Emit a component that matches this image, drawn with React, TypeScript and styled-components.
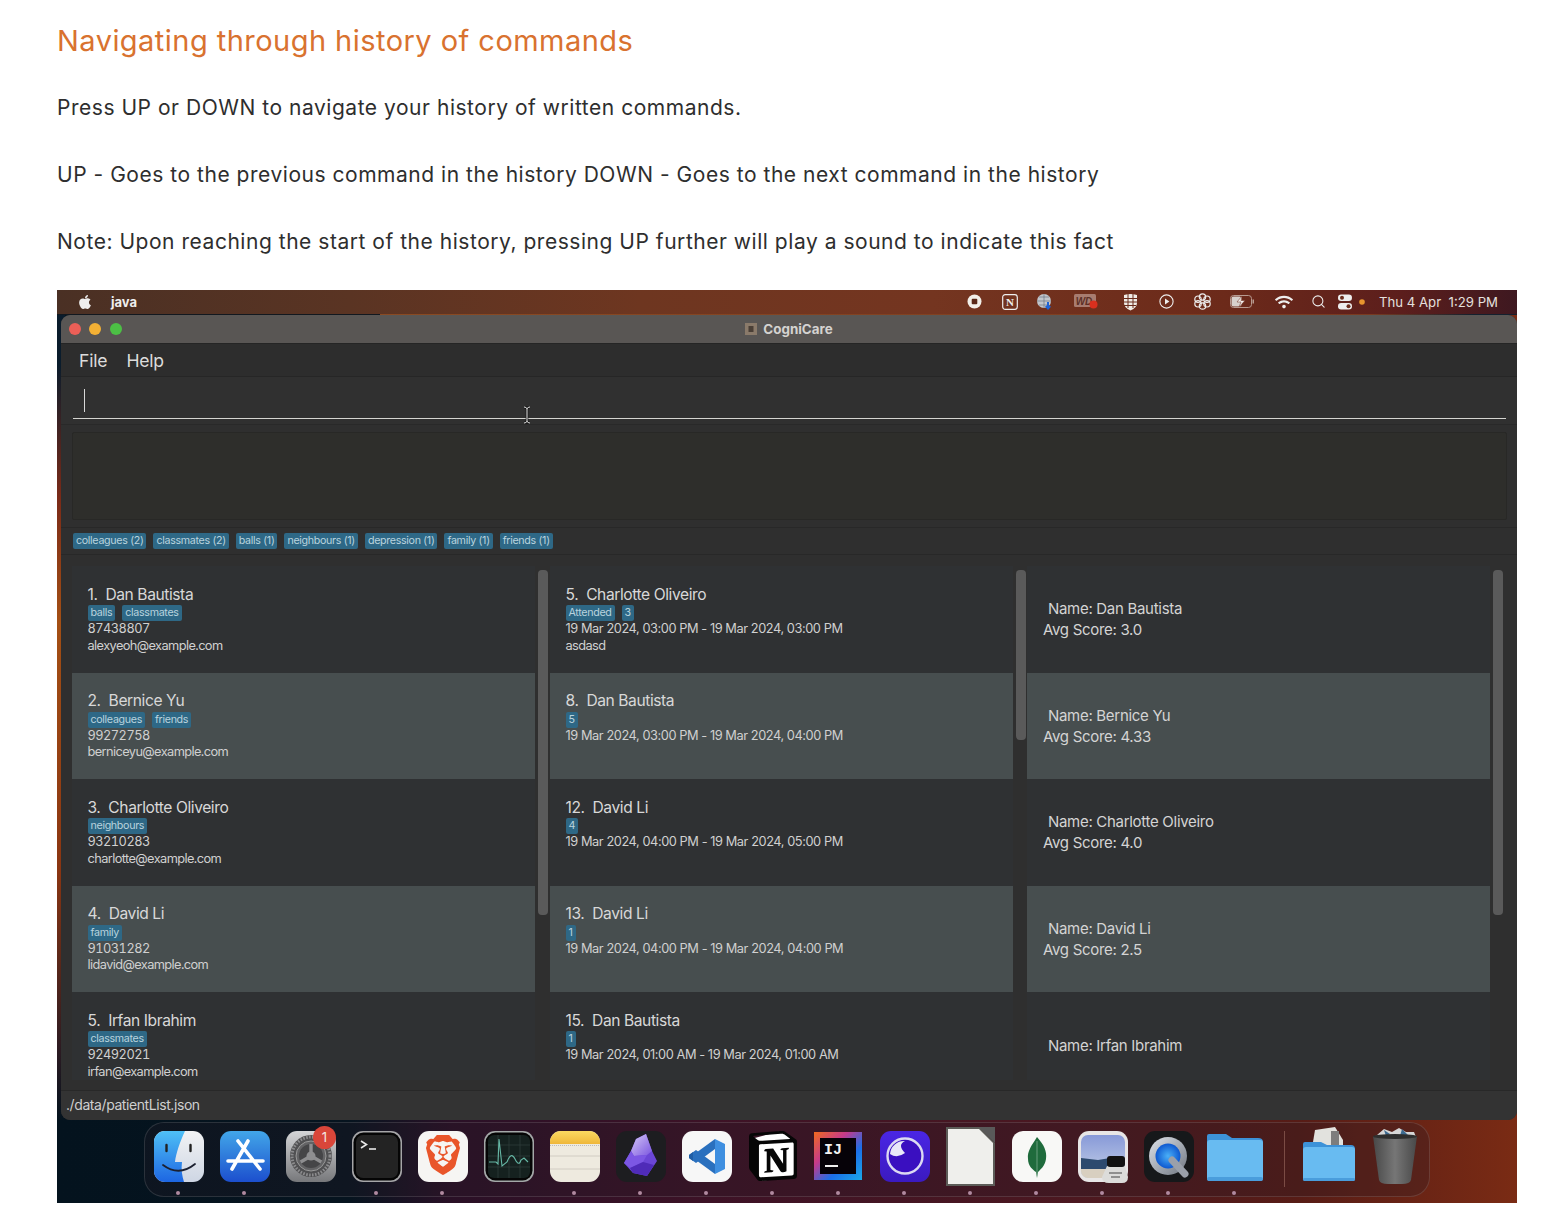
import React from "react";
import styled, { createGlobalStyle } from "styled-components";
import { FaApple, FaWifi } from "react-icons/fa";
import { Search } from "lucide-react";
import { SiBrave, SiNotion } from "react-icons/si";

const Global = createGlobalStyle`
  html, body { margin: 0; padding: 0; background: #fff; }
  body { font-family: "Inter", "Liberation Sans", sans-serif; }
`;

const Page = styled.div`
  width: 1564px; height: 1224px; box-sizing: border-box; padding: 0 47px 21px 57px; overflow: hidden; background: #fff;
`;
const Heading = styled.h1`
  margin: 0; padding-top: 22px; height: 36px; font-size: 29px; line-height: 38px; font-weight: 400; color: #d9722f; letter-spacing: 0.46px;
`;
const Para = styled.p`
  margin: 0; padding-top: 33px; font-size: 21px; height: 34px; line-height: 34px; color: #2e2e2e; letter-spacing: 0.53px; white-space: nowrap;
`;
const Intro = styled.div` height: 290px; `;

const Desktop = styled.div`
  position: relative; width: 1460px; height: 913px; overflow: hidden;
  background:
    linear-gradient(90deg, #04131e 0%, #06141f 20%, #2a1026 27%, #3d1226 45%, #4c1820 70%, #571c16 85%, #7a2b14 100%);
`;
const LeftGlow = styled.div`
  position: absolute; left: 0; top: 0; width: 8px; height: 830px;
  background: linear-gradient(180deg, #0a1c2c 0%, #0a1c2c 9%, #7a2a18 25%, #a44f14 40%, #8a3512 70%, #2a1a22 92%, #04131e 100%);
`;
const MenuBar = styled.div`
  position: relative; height: 25px; box-sizing: border-box; padding-bottom: 2px; display: flex; align-items: center; color: #eee; font-size: 13px;
  background: linear-gradient(90deg, #4a3024 0%, #5a3423 20%, #6e3620 40%, #743520 60%, #6c2a1a 80%, #5c1e1c 92%, #3e1820 100%);
  &::after { content: ""; position: absolute; left: 0; bottom: 0; height: 1px; width: 100%;
    background: linear-gradient(90deg, #12181f 0, #12181f 323px, #8a4a22 323px, #7a3a20 90%, #14202e 97%); }
`;
const AppleSlot = styled.span` display: flex; margin-left: 20px; color: #eee; `;
const AppName = styled.span` margin-left: 18px; font-weight: 700; font-size: 13px; color: #efefef; `;
const TrayGroup = styled.div` margin-left: auto; display: flex; align-items: center; padding-right: 19px; `;
const TraySlot = styled.span<{ $w: number }>`
  width: ${(p) => p.$w}px; display: flex; justify-content: center; align-items: center; color: #eee;
`;
const Clock = styled.span` margin-left: 13px; font-size: 13.2px; color: #e4e0de; white-space: pre; letter-spacing: 0; `;

const Window = styled.div`
  position: relative; margin-left: 4px; height: 805px; border-radius: 9px; overflow: hidden; background: #2f2f2f; display: flex; flex-direction: column;
`;
const TitleBar = styled.div`
  position: relative; height: 29px; flex: none; display: flex; align-items: center; justify-content: center; gap: 6px;
  background: #595654; border-bottom: 1px solid #252525; box-sizing: border-box; color: #d4d2d0; font-size: 13.4px; font-weight: 700;
`;
const Lights = styled.div` position: absolute; left: 8px; top: 8px; display: flex; gap: 8.4px; `;
const Light = styled.span<{ $c: string }>` width: 12px; height: 12px; border-radius: 50%; background: ${(p) => p.$c}; `;
const AppMenu = styled.div`
  height: 33px; flex: none; box-sizing: border-box; display: flex; align-items: center; gap: 19px; padding-left: 18px;
  color: #dcdcdc; font-size: 17.6px; background: #2d2d2d; border-bottom: 1px solid #262626; letter-spacing: -0.2px;
`;
const CommandBox = styled.div`
  position: relative; height: 48px; flex: none; box-sizing: border-box; background: #303030; border-bottom: 1px solid #292929; padding: 12px 11px 0 12px;
`;
const CommandLine = styled.div`
  height: 30px; box-sizing: border-box; border-bottom: 1.5px solid #d4d4d0; padding-left: 10.5px;
`;
const Caret = styled.span` display: block; width: 1px; height: 23px; background: #d8d8d8; `;
const IBeam = styled.svg` position: absolute; left: 461px; top: 29px; `;
const ResultBox = styled.div`
  height: 88px; flex: none; margin: 7px 10px 7px 11px; box-sizing: border-box; background: #2e2e2b; border: 1px solid #282826; border-radius: 2px;
`;
const TagBar = styled.div`
  height: 28px; flex: none; box-sizing: border-box; display: flex; align-items: center; gap: 7px; padding-left: 12px;
  border-top: 1px solid #282828; border-bottom: 1px solid #282828; background: #2f2f2f;
`;
const Tag = styled.span`
  height: 16px; line-height: 16px; padding: 0 3px; border-radius: 2px; background: #2e6886; color: #b9d3de; font-size: 10.7px; letter-spacing: -0.33px; white-space: nowrap;
`;
const Columns = styled.div`
  height: 514px; flex: none; margin-top: 11px; display: grid; grid-template-columns: 478px 477px 478px; padding-left: 11px; overflow: hidden;
`;
const Column = styled.div` display: flex; gap: 3px; overflow: hidden; `;
const List = styled.div` width: 463px; flex: none; display: flex; flex-direction: column; `;
const Track = styled.div` width: 10px; flex: none; padding-top: 4px; `;
const Thumb = styled.div<{ $h: number }>` width: 10px; height: ${(p) => p.$h}px; background: #5a5a5a; border-radius: 4px; `;
const Card = styled.div<{ $alt: boolean }>`
  height: 106.5px; flex: none; box-sizing: border-box; padding: 19.5px 0 0 15.5px; background: ${(p) => (p.$alt ? "#474e4f" : "#2f3133")};
`;
const CardTitle = styled.div` font-size: 15.6px; line-height: 18px; color: #d8d8d8; letter-spacing: -0.42px; white-space: pre; `;
const CardTags = styled.div` display: flex; gap: 7px; height: 16px; margin-top: 1.5px; `;
const CardLine = styled.div`
  font-size: 12.8px; line-height: 16.8px; color: #d0d0d0; letter-spacing: -0.52px; white-space: nowrap; font-variant-numeric: tabular-nums;
`;
const CardDate = styled(CardLine)` letter-spacing: -0.43px; font-variant-numeric: normal; `;
const CardMail = styled(CardLine)` letter-spacing: -0.6px; `;
const ScoreCard = styled.div<{ $alt: boolean }>`
  height: 106.5px; flex: none; box-sizing: border-box; padding: 0 0 0 16px; display: flex; flex-direction: column; justify-content: center; background: ${(p) => (p.$alt ? "#474e4f" : "#2f3133")};
`;
const ScoreName = styled.div` padding-left: 5px; font-size: 15px; line-height: 21px; color: #d4d4d4; letter-spacing: -0.3px; `;
const ScoreAvg = styled.div` font-size: 15px; line-height: 21px; color: #d4d4d4; letter-spacing: -0.3px; `;
const StatusBar = styled.div`
  margin-top: 10px; flex: 1; box-sizing: border-box; display: flex; align-items: center; padding: 0 0 2px 5px; background: #333333; border-top: 1px solid #282828;
  color: #cfcfcf; font-size: 14px; letter-spacing: -0.42px;
`;
const Dock = styled.div`
  position: relative; margin: 2px 0 0 87px; width: 1286px; height: 75px; box-sizing: border-box; display: flex; padding: 8px 0 0 9px;
  border: 1px solid rgba(255,255,255,0.12); border-radius: 20px; background: rgba(40,30,40,0.28);
`;
const DockItem = styled.div`
  position: relative; width: 50px; height: 51px; flex: none; margin-right: 16px;
  & > svg { display: block; overflow: visible; }
`;
const RunDot = styled.span`
  position: absolute; left: 22px; top: 60px; width: 4px; height: 4px; border-radius: 50%; background: #b08aa0;
`;
const Badge = styled.span`
  position: absolute; top: -5px; left: 27px; width: 23px; height: 23px; border-radius: 50%; background: #d9463a; color: #f4e6e2; font-size: 13px; line-height: 23px; text-align: center;
`;
const DockSep = styled.span`
  width: 1px; height: 56px; flex: none; margin: 0 18px 0 8px; background: rgba(255,200,180,0.28);
`;

const S = (props: React.SVGProps<SVGSVGElement>) => <svg width={50} height={51} viewBox="0 0 50 51" {...props} />;

const Finder = () => (
  <S>
    <defs>
      <linearGradient id="fb" x1="0" y1="0" x2="0" y2="1"><stop offset="0" stopColor="#4fc0f6" /><stop offset="1" stopColor="#1d66e2" /></linearGradient>
      <linearGradient id="fw" x1="0" y1="0" x2="0" y2="1"><stop offset="0" stopColor="#f2f3f4" /><stop offset="1" stopColor="#ced6e4" /></linearGradient>
    </defs>
    <rect width="50" height="51" rx="11" fill="url(#fw)" />
    <path d="M11 0H31C26 11 22 22 21 31H28C27 38 28 45 30 51H11A11 11 0 0 1 0 40V11A11 11 0 0 1 11 0Z" fill="url(#fb)" />
    <path d="M12.5 14v6M36.5 14v6" stroke="#222" strokeWidth="2.4" strokeLinecap="round" />
    <path d="M9 34Q25 46 41 33" stroke="#1c2030" strokeWidth="1.8" fill="none" strokeLinecap="round" />
  </S>
);
const AppStore = () => (
  <S>
    <defs><linearGradient id="as" x1="0" y1="0" x2="0" y2="1"><stop offset="0" stopColor="#42a6e8" /><stop offset="1" stopColor="#1c4fce" /></linearGradient></defs>
    <rect width="50" height="51" rx="11" fill="url(#as)" />
    <path d="M28 10L12 38M18 10L40 38M8 30H43" stroke="#fff" strokeWidth="3.6" strokeLinecap="round" />
  </S>
);
const SettingsIcon = () => (
  <S>
    <defs><linearGradient id="st" x1="0" y1="0" x2="0" y2="1"><stop offset="0" stopColor="#d4d5d7" /><stop offset="1" stopColor="#77787b" /></linearGradient></defs>
    <rect width="50" height="51" rx="11" fill="url(#st)" />
    <circle cx="25" cy="25" r="21" fill="#505052" />
    <circle cx="25" cy="25" r="19" fill="none" stroke="#8c8c8e" strokeWidth="3" strokeDasharray="1.6 1.4" />
    <circle cx="25" cy="25" r="15" fill="#636365" stroke="#999" strokeWidth="1" />
    <circle cx="25" cy="25" r="12" fill="#454547" />
    <path d="M25 25L25 13M25 25L14.6 31M25 25L35.4 31" stroke="#8e8e90" strokeWidth="3.4" />
    <circle cx="25" cy="25" r="4.5" fill="#8e8e90" />
  </S>
);
const Terminal = () => (
  <S>
    <rect width="50" height="51" rx="11" fill="#a6a6a8" />
    <rect x="1.5" y="1.5" width="47" height="48" rx="10" fill="#050505" />
    <rect x="4" y="4" width="42" height="43" rx="7" fill="#232323" />
    <path d="M9 10L14.5 13.5L9 17" stroke="#e8e8e8" strokeWidth="1.6" fill="none" />
    <path d="M17 18H24" stroke="#e8e8e8" strokeWidth="1.6" />
  </S>
);
const Brave = () => (
  <S>
    <rect width="50" height="51" rx="11" fill="#f6f5f3" />
    <SiBrave x="5" y="4" size={40} color="#e9552a" />
  </S>
);
const Activity = () => (
  <S>
    <rect width="50" height="51" rx="11" fill="#a4a8a8" />
    <rect x="1.5" y="1.5" width="47" height="48" rx="10" fill="#050505" />
    <rect x="4" y="4" width="42" height="43" rx="6" fill="#15211f" />
    <path d="M4 14H46M4 25H46M4 36H46M14 4V47M25 4V47M36 4V47" stroke="#2d3e3a" strokeWidth="0.8" />
    <path d="M5 31H12L14 33L15 8L18 35L23 31Q27 20 31 28T37 29L40 27L44 31" stroke="#66b8a6" strokeWidth="1.1" fill="none" />
  </S>
);
const Notes = () => (
  <S>
    <defs><linearGradient id="nt" x1="0" y1="0" x2="0" y2="1"><stop offset="0" stopColor="#fbd961" /><stop offset="1" stopColor="#efb73a" /></linearGradient></defs>
    <rect width="50" height="51" rx="11" fill="#eeeadf" />
    <path d="M11 0H39A11 11 0 0 1 50 11V13H0V11A11 11 0 0 1 11 0Z" fill="url(#nt)" />
    <path d="M0 25H50M0 38H50" stroke="#c9c5ba" strokeWidth="0.8" />
    <path d="M0 14.5H50" stroke="#bbb" strokeWidth="1" strokeDasharray="1 1" />
  </S>
);
const Obsidian = () => (
  <S>
    <defs>
      <linearGradient id="ob" x1="0" y1="0" x2="1" y2="1"><stop offset="0" stopColor="#d6c9f6" /><stop offset="1" stopColor="#7a55e0" /></linearGradient>
    </defs>
    <rect width="50" height="51" rx="11" fill="#1d1d20" />
    <polygon points="20,8 30,3 36,20 41,30 31,45 17,42 8,32 15,20" fill="#6b46d6" />
    <polygon points="20,8 30,3 36,20 31,24 18,25 15,20" fill="url(#ob)" />
    <polygon points="18,25 31,24 27,31 14,37 8,32 15,20" fill="#7c57e4" />
    <polygon points="27,31 38,34 31,45 17,42 14,37" fill="#4f2bb8" />
  </S>
);
const VSCode = () => (
  <S>
    <rect width="50" height="51" rx="11" fill="#f7f7f7" />
    <polygon points="33,8 43,13 43,38 33,43 33,33 33,18" fill="#3f8fe0" />
    <polygon points="33,8 33,18 14,32 7,27" fill="#2a70be" />
    <polygon points="33,43 33,33 14,19 7,24" fill="#2a70be" />
    <polygon points="7,24 11,21 11,30 7,27" fill="#1f5ea6" />
  </S>
);
const Notion = () => (
  <S>
    <polygon points="3,8 33,0 48,10 48,45 13,50 2,37" fill="#fff" />
    <SiNotion x="0" y="0" size={50} color="#060606" />
  </S>
);
const IntelliJ = () => (
  <S>
    <defs><linearGradient id="ij" x1="0" y1="0" x2="1" y2="1"><stop offset="0" stopColor="#f26a1e" /><stop offset="0.35" stopColor="#c43a8c" /><stop offset="0.65" stopColor="#1b6fe8" /><stop offset="1" stopColor="#1aa8e8" /></linearGradient></defs>
    <rect width="48" height="48" x="0" y="1" fill="url(#ij)" />
    <rect x="6" y="7" width="36" height="36" fill="#060208" />
    <text x="10" y="23" fill="#f2f2f2" fontFamily="Liberation Mono, monospace" fontWeight="700" fontSize="15">IJ</text>
    <rect x="11" y="34" width="13" height="2" fill="#eee" />
  </S>
);
const Lens = () => (
  <S>
    <defs><linearGradient id="ln" x1="0" y1="0" x2="0" y2="1"><stop offset="0" stopColor="#4a26e4" /><stop offset="1" stopColor="#3b1ac0" /></linearGradient></defs>
    <rect width="50" height="51" rx="11" fill="url(#ln)" />
    <circle cx="25" cy="25" r="17.5" fill="#3a0fc0" stroke="#dcdaf2" strokeWidth="2.4" />
    <path d="M10 23A14 14 0 0 1 25 10Q17 14 25 22Q17 28 10 23Z" fill="#e9e8f8" />
  </S>
);
const DocIcon = () => (
  <S>
    <polygon points="0,-4 34,-4 49,12 49,55 0,55" fill="#5c5c58" />
    <polygon points="2,-2 33,-2 47,12 47,53 2,53" fill="#efefec" />
    <polygon points="33,-4 49,-4 49,12" fill="#595959" />
  </S>
);
const Mongo = () => (
  <S>
    <rect width="50" height="51" rx="11" fill="#f8f8f6" />
    <path d="M25 6C32 14 35 20 34 28C33 35 28 39 26 41L25 47L24 41C21 39 16 35 16 28C15 20 20 14 25 6Z" fill="#1f6b3c" />
    <path d="M25 10V45" stroke="#9cc0a8" strokeWidth="0.6" />
  </S>
);
const Preview = () => (
  <S>
    <defs><linearGradient id="pv" x1="0" y1="0" x2="0" y2="1"><stop offset="0" stopColor="#8799d8" /><stop offset="1" stopColor="#c6d2e8" /></linearGradient></defs>
    <rect width="50" height="51" rx="11" fill="#e8e6e6" />
    <rect x="3" y="4" width="44" height="43" rx="7" fill="url(#pv)" />
    <path d="M3 27L20 29L32 27V38H3Z" fill="#2d4a6e" />
    <path d="M3 38H32V47H10A7 7 0 0 1 3 40Z" fill="#d8cfc0" />
    <path d="M29 35H47L50 46Q50 52 44 52H31Q24 52 24 46Z" fill="#dcdcda" />
    <rect x="29" y="25" width="18" height="11" rx="3" fill="#121212" />
    <path d="M31 42h13M33 46h9" stroke="#777" strokeWidth="1.6" />
  </S>
);
const QuickTime = () => (
  <S>
    <defs>
      <radialGradient id="qb"><stop offset="0" stopColor="#4ab0f8" /><stop offset="1" stopColor="#0e58d0" /></radialGradient>
      <linearGradient id="qs" x1="0" y1="0" x2="1" y2="1"><stop offset="0" stopColor="#dfe3ea" /><stop offset="1" stopColor="#6f7680" /></linearGradient>
    </defs>
    <rect width="50" height="51" rx="11" fill="#16181a" />
    <circle cx="24" cy="25" r="19" fill="url(#qs)" />
    <circle cx="24" cy="25" r="12.5" fill="url(#qb)" />
    <path d="M28 29L41 43" stroke="#9aa0aa" strokeWidth="7" strokeLinecap="round" />
  </S>
);
const Folder = () => (
  <svg width={58} height={51} viewBox="0 0 58 51" style={{ marginLeft: -4 }}>
    <path d="M3 3H20L26 7H52Q57 7 57 11V20H1V5Q1 3 3 3Z" fill="#3d92d8" />
    <rect x="1" y="9" width="56" height="41" rx="3" fill="#68bbf1" />
    <rect x="1" y="46" width="56" height="4" rx="2" fill="#4a9ddc" />
  </svg>
);
const FolderDocs = () => (
  <svg width={52} height={56} viewBox="0 0 52 56" style={{ marginTop: -5 }}>
    <path d="M10 16L12 4L32 1L40 14V22H10Z" fill="#e2e2de" />
    <rect x="28" y="5" width="8" height="14" fill="#7d7d7d" />
    <path d="M2 16H18L24 19H48Q52 19 52 23V30H0V18Q0 16 2 16Z" fill="#3d92d8" />
    <rect x="0" y="21" width="52" height="34" rx="3" fill="#68bbf1" />
    <rect x="0" y="52" width="52" height="3" rx="1.5" fill="#4a9ddc" />
  </svg>
);
const Trash = () => (
  <svg width={46} height={58} viewBox="0 0 46 58" style={{ marginTop: -4, marginLeft: 3 }}>
    <defs><linearGradient id="tr" x1="0" y1="0" x2="1" y2="0"><stop offset="0" stopColor="#484848" /><stop offset="0.5" stopColor="#767676" /><stop offset="1" stopColor="#484848" /></linearGradient></defs>
    <path d="M5 8L12 2L20 5L27 1L34 5L42 5L44 10H2Z" fill="#d6d6d6" />
    <path d="M12 3L18 7L14 9ZM30 2L36 8L28 9Z" fill="#3c6a90" />
    <path d="M1 9H45L39 53Q38 57 30 57H16Q8 57 7 53Z" fill="url(#tr)" />
    <ellipse cx="23" cy="9.5" rx="22" ry="2.4" fill="#2e2e2e" />
  </svg>
);

const IBeamIcon = () => (
  <IBeam width="10" height="18" viewBox="0 0 10 18">
    <path d="M2 1C3.5 1 5 2 5 3V15C5 16 3.5 17 2 17M8 1C6.5 1 5 2 5 3M5 15C5 16 6.5 17 8 17" stroke="#111" strokeWidth="2.6" fill="none" />
    <path d="M2 1C3.5 1 5 2 5 3V15C5 16 3.5 17 2 17M8 1C6.5 1 5 2 5 3M5 15C5 16 6.5 17 8 17" stroke="#eee" strokeWidth="1" fill="none" />
  </IBeam>
);

const Tray = () => (
  <TrayGroup>
    <TraySlot $w={34}><svg width="15" height="15" viewBox="0 0 15 15"><circle cx="7.5" cy="7.5" r="7" fill="#f2efe9" /><rect x="4.7" y="4.7" width="5.6" height="5.6" rx="1" fill="#5a2818" /></svg></TraySlot>
    <TraySlot $w={36}><svg width="16" height="16" viewBox="0 0 16 16"><rect x="0.7" y="0.7" width="14.6" height="14.6" rx="2.5" fill="none" stroke="#eee" strokeWidth="1.2" /><text x="8" y="12" textAnchor="middle" fontSize="11" fontWeight="700" fontFamily="Liberation Serif, serif" fill="#eee">N</text></svg></TraySlot>
    <TraySlot $w={34}><svg width="17" height="17" viewBox="0 0 17 17"><circle cx="8" cy="8" r="7" fill="#c2c6cc" /><path d="M1 8H15M8 1V15M3 4H13M3 12H13" stroke="#6d7684" strokeWidth="0.7" /><path d="M12 9V15M9.8 13L12 15.5L14.2 13" stroke="#1d63d8" strokeWidth="2" fill="none" /></svg></TraySlot>
    <TraySlot $w={50}><svg width="25" height="17" viewBox="0 0 25 17"><rect y="1" width="22" height="13" rx="1.5" fill="#a87c70" /><text x="10" y="12" textAnchor="middle" fontSize="10" fontWeight="700" fontStyle="italic" fontFamily="Liberation Sans, sans-serif" fill="#5c3027">WD</text><circle cx="19.5" cy="11.5" r="4" fill="#d9301e" /></svg></TraySlot>
    <TraySlot $w={38}><svg width="15" height="18" viewBox="0 0 15 18"><path d="M1 2Q7.5 0 14 2V10Q14 15 7.5 17.5Q1 15 1 10Z" fill="#f0ece6" /><path d="M1 5.5H14M1 9H14M1 12.5H13M5 1V15M10 1V15" stroke="#6b2c1c" strokeWidth="1" /></svg></TraySlot>
    <TraySlot $w={34}><svg width="15" height="15" viewBox="0 0 15 15"><circle cx="7.5" cy="7.5" r="6.6" fill="none" stroke="#eee" strokeWidth="1.1" /><path d="M6 4.6L10.4 7.5L6 10.4Z" fill="#eee" /></svg></TraySlot>
    <TraySlot $w={38}><svg width="17" height="17" viewBox="0 0 17 17" fill="none" stroke="#eee" strokeWidth="1.2"><circle cx="8.5" cy="4" r="3.2" /><circle cx="8.5" cy="13" r="3.2" /><circle cx="4" cy="6.2" r="3.2" /><circle cx="13" cy="6.2" r="3.2" /><circle cx="4" cy="10.8" r="3.2" /><circle cx="13" cy="10.8" r="3.2" /></svg></TraySlot>
    <TraySlot $w={42}><svg width="25" height="13" viewBox="0 0 25 13"><rect x="0.5" y="0.5" width="21" height="12" rx="3" fill="none" stroke="#b89a90" /><rect x="1.5" y="1.5" width="10" height="10" rx="2" fill="#d8d0cc" /><path d="M12 1L7 7H11L9 12L15 5.5H11Z" fill="#f4f0ee" stroke="#6a2c1c" strokeWidth="0.5" /><rect x="22.5" y="4.5" width="1.5" height="4" fill="#b89a90" /></svg></TraySlot>
    <TraySlot $w={40}><FaWifi size={18} /></TraySlot>
    <TraySlot $w={30}><Search size={15} strokeWidth={1.7} /></TraySlot>
    <TraySlot $w={24}><svg width="15" height="16" viewBox="0 0 15 16"><rect x="0" y="0.5" width="14" height="6.5" rx="3.2" fill="#eee" /><circle cx="4" cy="3.7" r="2" fill="#6a2c1c" /><rect x="0" y="9" width="14" height="6.5" rx="3.2" fill="#eee" /><circle cx="10.5" cy="12.2" r="2" fill="#6a2c1c" /></svg></TraySlot>
    <TraySlot $w={8}><svg width="6" height="6" viewBox="0 0 6 6"><circle cx="3" cy="3" r="2.8" fill="#e8952e" /></svg></TraySlot>
    <Clock>Thu 4 Apr  1:29 PM</Clock>
  </TrayGroup>
);

const persons = [
  { t: "1.  Dan Bautista", tags: ["balls", "classmates"], a: "87438807", b: "alexyeoh@example.com" },
  { t: "2.  Bernice Yu", tags: ["colleagues", "friends"], a: "99272758", b: "berniceyu@example.com" },
  { t: "3.  Charlotte Oliveiro", tags: ["neighbours"], a: "93210283", b: "charlotte@example.com" },
  { t: "4.  David Li", tags: ["family"], a: "91031282", b: "lidavid@example.com" },
  { t: "5.  Irfan Ibrahim", tags: ["classmates"], a: "92492021", b: "irfan@example.com" },
];
const appts = [
  { t: "5.  Charlotte Oliveiro", tags: ["Attended", "3"], a: "19 Mar 2024, 03:00 PM - 19 Mar 2024, 03:00 PM", b: "asdasd" },
  { t: "8.  Dan Bautista", tags: ["5"], a: "19 Mar 2024, 03:00 PM - 19 Mar 2024, 04:00 PM", b: "" },
  { t: "12.  David Li", tags: ["4"], a: "19 Mar 2024, 04:00 PM - 19 Mar 2024, 05:00 PM", b: "" },
  { t: "13.  David Li", tags: ["1"], a: "19 Mar 2024, 04:00 PM - 19 Mar 2024, 04:00 PM", b: "" },
  { t: "15.  Dan Bautista", tags: ["1"], a: "19 Mar 2024, 01:00 AM - 19 Mar 2024, 01:00 AM", b: "" },
];
const scores = [
  { n: "Name: Dan Bautista", s: "Avg Score: 3.0" },
  { n: "Name: Bernice Yu", s: "Avg Score: 4.33" },
  { n: "Name: Charlotte Oliveiro", s: "Avg Score: 4.0" },
  { n: "Name: David Li", s: "Avg Score: 2.5" },
  { n: "Name: Irfan Ibrahim", s: "" },
];
const allTags = ["colleagues (2)", "classmates (2)", "balls (1)", "neighbours (1)", "depression (1)", "family (1)", "friends (1)"];

type Rec = { t: string; tags: string[]; a: string; b: string };
const RecordList = ({ rows, thumb, Line }: { rows: Rec[]; thumb: number; Line: typeof CardLine }) => (
  <Column>
    <List>
      {rows.map((r, i) => (
        <Card key={r.t} $alt={i % 2 === 1}>
          <CardTitle>{r.t}</CardTitle>
          <CardTags>{r.tags.map((x) => <Tag key={x}>{x}</Tag>)}</CardTags>
          <Line>{r.a}</Line>
          {r.b && <CardMail>{r.b}</CardMail>}
        </Card>
      ))}
    </List>
    <Track><Thumb $h={thumb} /></Track>
  </Column>
);

const dockIcons: { C: React.FC; run: boolean; badge?: string }[] = [
  { C: Finder, run: true }, { C: AppStore, run: true }, { C: SettingsIcon, run: false, badge: "1" }, { C: Terminal, run: true },
  { C: Brave, run: true }, { C: Activity, run: false }, { C: Notes, run: true }, { C: Obsidian, run: true }, { C: VSCode, run: true },
  { C: Notion, run: true }, { C: IntelliJ, run: true }, { C: Lens, run: true }, { C: DocIcon, run: true }, { C: Mongo, run: true },
  { C: Preview, run: true }, { C: QuickTime, run: true }, { C: Folder, run: true },
];

export default function App() {
  return (
    <Page>
      <Global />
      <Intro>
        <Heading>Navigating through history of commands</Heading>
        <Para>Press UP or DOWN to navigate your history of written commands.</Para>
        <Para>UP - Goes to the previous command in the history DOWN - Goes to the next command in the history</Para>
        <Para>Note: Upon reaching the start of the history, pressing UP further will play a sound to indicate this fact</Para>
      </Intro>
      <Desktop>
        <LeftGlow />
        <MenuBar>
          <AppleSlot><FaApple size={16} /></AppleSlot>
          <AppName>java</AppName>
          <Tray />
        </MenuBar>
        <Window>
          <TitleBar>
            <Lights><Light $c="#ec5f57" /><Light $c="#f3b034" /><Light $c="#4cc045" /></Lights>
            <svg width="12" height="12" viewBox="0 0 12 12"><rect width="12" height="12" fill="#8a7a6a" /><rect x="3.5" y="3" width="5" height="6" fill="#4a3f36" /></svg>
            CogniCare
          </TitleBar>
          <AppMenu><span>File</span><span>Help</span></AppMenu>
          <CommandBox>
            <CommandLine><Caret /></CommandLine>
            <IBeamIcon />
          </CommandBox>
          <ResultBox />
          <TagBar>{allTags.map((t) => <Tag key={t}>{t}</Tag>)}</TagBar>
          <Columns>
            <RecordList rows={persons} thumb={345} Line={CardLine} />
            <RecordList rows={appts} thumb={170} Line={CardDate} />
            <Column>
              <List>
                {scores.map((r, i) => (
                  <ScoreCard key={r.n} $alt={i % 2 === 1}>
                    <ScoreName>{r.n}</ScoreName>
                    {r.s && <ScoreAvg>{r.s}</ScoreAvg>}
                  </ScoreCard>
                ))}
              </List>
              <Track><Thumb $h={345} /></Track>
            </Column>
          </Columns>
          <StatusBar>./data/patientList.json</StatusBar>
        </Window>
        <Dock>
          {dockIcons.map(({ C, run, badge }, i) => (
            <DockItem key={i}>
              <C />
              {run && <RunDot />}
              {badge && <Badge>{badge}</Badge>}
            </DockItem>
          ))}
          <DockSep />
          <DockItem><FolderDocs /></DockItem>
          <DockItem><Trash /></DockItem>
        </Dock>
      </Desktop>
    </Page>
  );
}
